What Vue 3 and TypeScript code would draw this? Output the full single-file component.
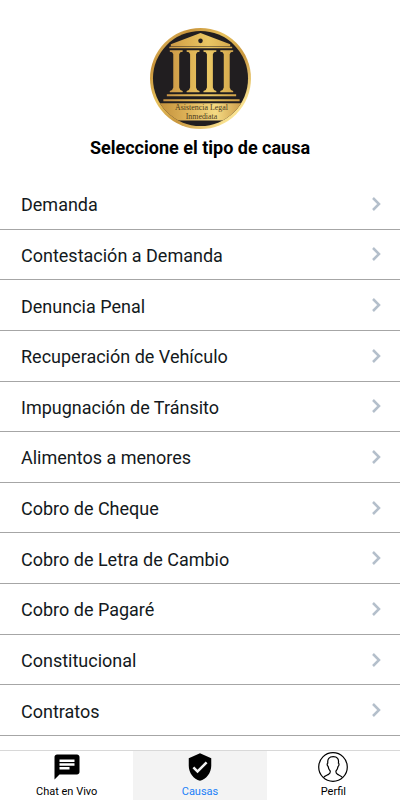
<script setup lang="ts">
import { ref } from 'vue'

type TabId = 'chat' | 'causas' | 'perfil'

interface Tab {
  id: TabId
  label: string
}

const causes: string[] = [
  'Demanda',
  'Contestación a Demanda',
  'Denuncia Penal',
  'Recuperación de Vehículo',
  'Impugnación de Tránsito',
  'Alimentos a menores',
  'Cobro de Cheque',
  'Cobro de Letra de Cambio',
  'Cobro de Pagaré',
  'Constitucional',
  'Contratos',
]

const tabs: Tab[] = [
  { id: 'chat', label: 'Chat en Vivo' },
  { id: 'causas', label: 'Causas' },
  { id: 'perfil', label: 'Perfil' },
]

// Horizontal centre of each temple column in the logo
const columns: number[] = [26, 43, 60, 77]

const activeTab = ref<TabId>('causas')
</script>

<template>
  <div class="screen">
    <header class="header">
      <svg class="logo" viewBox="0 0 102 102" aria-hidden="true">
        <defs>
          <linearGradient id="ring" x1="0" y1="0" x2="1" y2="1">
            <stop offset="0" stop-color="#f3dc8c" />
            <stop offset="0.2" stop-color="#c9953c" />
            <stop offset="0.4" stop-color="#e6c05c" />
            <stop offset="0.6" stop-color="#c9973e" />
            <stop offset="0.85" stop-color="#fbe594" />
            <stop offset="1" stop-color="#c08b35" />
          </linearGradient>
          <linearGradient id="gold" gradientUnits="userSpaceOnUse" x1="12" y1="0" x2="90" y2="0">
            <stop offset="0" stop-color="#c38d42" />
            <stop offset="0.3" stop-color="#dcae50" />
            <stop offset="0.6" stop-color="#eac764" />
            <stop offset="1" stop-color="#d0a146" />
          </linearGradient>
          <linearGradient id="band" x1="0" y1="0" x2="1" y2="0">
            <stop offset="0" stop-color="#b98432" />
            <stop offset="0.35" stop-color="#dcb056" />
            <stop offset="0.65" stop-color="#f5da83" />
            <stop offset="1" stop-color="#bd8736" />
          </linearGradient>
          <clipPath id="disc"><circle cx="51" cy="51" r="48" /></clipPath>
        </defs>
        <circle cx="51" cy="51" r="51" fill="url(#ring)" />
        <circle cx="51" cy="51" r="48" fill="#211e20" />
        <g clip-path="url(#disc)">
          <path d="M0 76h102v17.500H0z" fill="url(#band)" />
        </g>
        <g fill="url(#gold)">
          <path d="M51 5 81 16.500v2H21v-2zM19.500 19h63.500v1.500H19.500z" />
          <path
            v-for="x in columns"
            :key="x"
            :d="`M${x - 6} 22.500h13v1.500q-3 0-3.500 2.500V60q.5 3 3.500 3.500V65h-13v-1.500q3-.5 3.500-3.500V26.500q-.5-2.500-3.500-2.500z`"
          />
          <path d="M17 67h70v2H17zM13.500 72h77v2H13.500z" />
        </g>
        <circle cx="51" cy="13" r="2.300" fill="#211e20" />
        <g class="logo-text" text-anchor="middle">
          <text x="52" y="83">Asistencia Legal</text>
          <text x="52" y="92">Inmediata</text>
        </g>
      </svg>
      <h1 class="title">Seleccione el tipo de causa</h1>
    </header>

    <main class="list">
      <button v-for="cause in causes" :key="cause" type="button" class="row">
        <span class="cause">{{ cause }}</span>
        <svg class="chevron" viewBox="0 0 10 16" aria-hidden="true">
          <path d="M2 2 8 8l-6 6" />
        </svg>
      </button>
    </main>

    <nav class="tabs">
      <button
        v-for="tab in tabs"
        :key="tab.id"
        type="button"
        class="tab"
        :class="{ active: activeTab === tab.id }"
        @click="activeTab = tab.id"
      >
        <svg v-if="tab.id === 'chat'" class="icon" viewBox="0 0 24 24" aria-hidden="true">
          <path d="M20 2H4c-1.100 0-1.990.9-1.990 2L2 22l4-4h14c1.100 0 2-.9 2-2V4c0-1.100-.9-2-2-2zM6 9h12v2H6V9zm8 5H6v-2h8v2zm4-6H6V6h12v2z" />
        </svg>
        <svg v-else-if="tab.id === 'causas'" class="icon" viewBox="0 0 24 24" aria-hidden="true">
          <path d="M12 1 3 5v6c0 5.550 3.840 10.740 9 12 5.160-1.260 9-6.450 9-12V5l-9-4zm-2 16-4-4 1.410-1.410L10 14.170l6.590-6.590L18 9l-8 8z" />
        </svg>
        <svg v-else class="icon outline" viewBox="0 0 30 30" aria-hidden="true">
          <circle cx="15" cy="15" r="14.300" />
          <path d="M5.500 25.500c1.200-1.600 3.500-2.300 5-3.100 1.700-.8 2-1.800 1.700-3.400-1.100-1.200-1.800-2.700-2-4.400-1.300-1-1.300-3-.4-3.500-.5-4 1.300-6.400 5.400-6.400s5.900 2.400 5.200 6.400c.9.600.8 2.500-.4 3.500-.2 1.700-.9 3.200-2 4.400-.3 1.600.1 2.600 1.700 3.400 1.500.8 3.700 1.500 4.800 3.100" />
        </svg>
        <span>{{ tab.label }}</span>
      </button>
    </nav>
  </div>
</template>

<style>
body {
  margin: 0;
  background: #fff;
}
</style>

<style scoped>
.screen {
  display: flex;
  flex-direction: column;
  min-height: 100vh;
  font-family: Roboto, "Liberation Sans", sans-serif;
  color: #000;
}

.header {
  display: flex;
  flex-direction: column;
  align-items: center;
  gap: 7px;
  padding: 28px 16px 19px;
}

.logo {
  width: 101px;
  height: 101px;
}

.logo-text {
  font-family: "Liberation Serif", serif;
  font-size: 8px;
  fill: #4a3a20;
}

.title {
  margin: 0;
  font-size: 18px;
  line-height: 24px;
  font-weight: 700;
}

.list {
  flex: 1;
  display: grid;
  grid-auto-rows: 1fr;
  padding-bottom: 14px;
}

button {
  margin: 0;
  border: 0;
  background: none;
  font-family: inherit;
  cursor: pointer;
}

.row {
  display: flex;
  align-items: center;
  justify-content: space-between;
  padding: 0 19px 0 21px;
  border-bottom: 1px solid #a6a6a6;
  color: #131920;
  font-size: 18px;
  line-height: 24px;
  text-align: left;
}

.cause {
  padding-top: 3px;
}

.chevron {
  width: 10px;
  height: 16px;
  fill: none;
  stroke: #b4bfcb;
  stroke-width: 2.500;
}

.tabs {
  display: grid;
  grid-template-columns: repeat(3, 1fr);
  border-top: 1px solid #d8d8d8;
}

.tab {
  display: flex;
  flex-direction: column;
  align-items: center;
  gap: 2px;
  padding: 1px 0;
  color: #000;
  font-size: 11px;
  line-height: 15px;
}

.tab.active {
  background: #f3f3f3;
}

.tab.active span {
  color: #1a80f8;
}

.icon {
  width: 30px;
  height: 30px;
  fill: #000;
}

.icon.outline {
  fill: none;
  stroke: #000;
  stroke-width: 1.200;
}
</style>
